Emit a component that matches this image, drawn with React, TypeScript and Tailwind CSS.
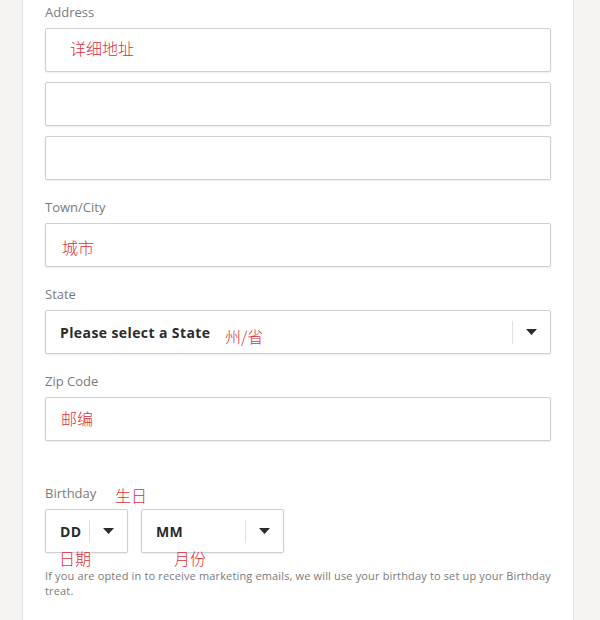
import React from 'react';

const RED = 'text-[#d8303c]';
const CJK = "font-['Noto_Sans_CJK_SC',sans-serif]";

function Label({ children }: { children: React.ReactNode }) {
  return (
    <div className="h-[20px] mb-[6px] text-[13px] leading-[20px] text-[#7a7a7a]">{children}</div>
  );
}

function Note({ text, className }: { text: string; className: string }) {
  return (
    <span className={`absolute ${CJK} ${RED} text-[16px] leading-[20px] whitespace-nowrap tracking-normal font-light ${className}`}>
      {text}
    </span>
  );
}

function Field({ children }: { children?: React.ReactNode }) {
  return (
    <div className="relative h-[44px] rounded-[2px] border border-[#cfcfcf] bg-white shadow-[0_1px_2px_rgba(0,0,0,0.08)]">
      {children}
    </div>
  );
}

function Caret() {
  return (
    <svg width="11" height="6" viewBox="0 0 11 6" className="block">
      <path d="M0 0h11L5.5 6z" fill="#2b2b2b" />
    </svg>
  );
}

function Select({ value, width, children }: { value: string; width: string; children?: React.ReactNode }) {
  return (
    <div
      className={`relative flex h-[44px] items-center rounded-[2px] border border-[#cfcfcf] bg-white shadow-[0_1px_2px_rgba(0,0,0,0.08)] ${width}`}
    >
      <span className="flex-1 pl-[14px] text-[14px] font-bold tracking-[0.4px] text-[#2b2b2b]">{value}</span>
      <span className="h-[23px] w-px bg-[#e2e2e2]" />
      <span className="flex w-[37px] justify-center">
        <Caret />
      </span>
      {children}
    </div>
  );
}

export default function App() {
  return (
    <div className="min-h-[620px] bg-[#f5f4f2] font-['Open_Sans',sans-serif]">
      <div className="ml-[22px] min-h-[620px] w-[552px] border-x border-[#e4e4e4] bg-white px-[22px] pt-[2px]">
        {/* Address */}
        <Label>Address</Label>
        <div className="flex flex-col gap-[10px]">
          <Field>
            <Note text="详细地址" className="left-[24px] top-[9px]" />
          </Field>
          <Field />
          <Field />
        </div>

        {/* Town */}
        <div className="mt-[17px]">
          <Label>Town/City</Label>
          <Field>
            <Note text="城市" className="left-[16px] top-[13px]" />
          </Field>
        </div>

        {/* State */}
        <div className="mt-[17px]">
          <Label>State</Label>
          <Select value="Please select a State" width="w-full">
            <Note text="州/省" className="left-[179px] top-[15px]" />
          </Select>
        </div>

        {/* Zip */}
        <div className="mt-[17px]">
          <Label>Zip Code</Label>
          <Field>
            <Note text="邮编" className="left-[15px] top-[10px]" />
          </Field>
        </div>

        {/* Birthday */}
        <div className="relative mt-[42px]">
          <Label>Birthday</Label>
          <Note text="生日" className="left-[70px] top-[2px]" />
          <div className="relative flex gap-[13px]">
            <Select value="DD" width="w-[83px]" />
            <Select value="MM" width="w-[143px]" />
            <Note text="日期" className="left-[14px] top-[39px]" />
            <Note text="月份" className="left-[129px] top-[39px]" />
          </div>
          <p className="mt-[15px] w-[510px] text-[11px] leading-[15px] tracking-[0.15px] text-[#7a7a7a]">
            If you are opted in to receive marketing emails, we will use your birthday to set up your Birthday
            treat.
          </p>
        </div>
      </div>
    </div>
  );
}
